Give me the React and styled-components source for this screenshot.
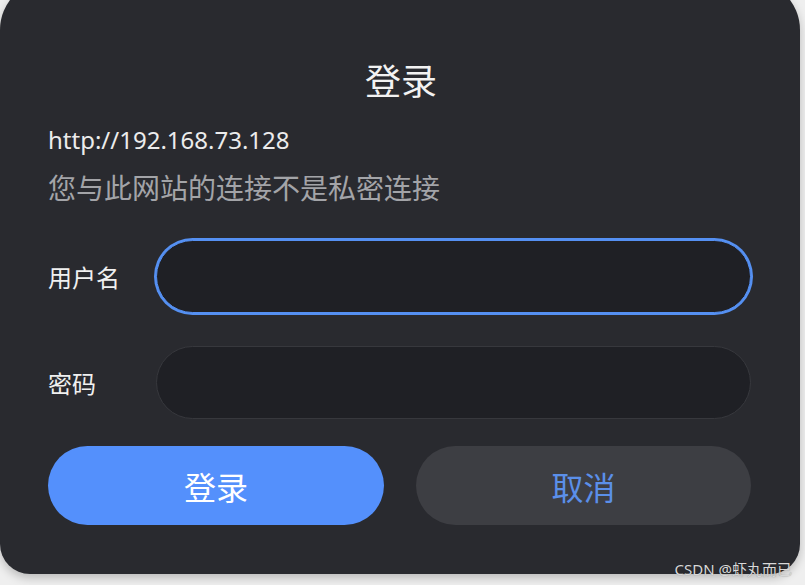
import React from "react";
import styled, { createGlobalStyle } from "styled-components";

const Global = createGlobalStyle`
  html, body { margin: 0; padding: 0; }
  body {
    background: #efefef;
    overflow: hidden;
    font-family: "Noto Sans", "Noto Sans CJK SC", sans-serif;
  }
`;

const Page = styled.div`
  position: relative;
  width: 805px;
  height: 585px;
  overflow: hidden;
`;

const Card = styled.div`
  box-sizing: border-box;
  width: 800px;
  height: 594px;
  margin-top: -20px;
  background: #292a2f;
  border-radius: 50px 50px 30px 30px;
  box-shadow: 0 4px 10px rgba(0, 0, 0, 0.22);
  padding: 82px 49px 0 48px;
  display: flex;
  flex-direction: column;
`;

const Title = styled.h1`
  margin: 0;
  font-size: 36px;
  line-height: 40px;
  font-weight: 400;
  color: #f2f2f2;
  text-align: center;
  padding-left: 3px;
`;

const Url = styled.div`
  margin-top: 23px;
  font-size: 24px;
  line-height: 30px;
  color: #ececec;
`;

const Notice = styled.div`
  margin-top: 15px;
  font-size: 28px;
  line-height: 36px;
  color: #a3a4a8;
`;

const Field = styled.div`
  display: flex;
  align-items: center;
  margin-top: ${(p) => p.$gap}px;
`;

const Label = styled.label`
  width: 108px;
  flex: none;
  font-size: 24px;
  color: #f0f0f0;
`;

const Input = styled.input`
  box-sizing: border-box;
  width: 595px;
  height: 73px;
  border-radius: 37px;
  background: #1f2025;
  border: 1px solid ${(p) => (p.$focused ? "#5590f2" : "#37383d")};
  box-shadow: ${(p) => (p.$focused ? "0 0 0 2px #5590f2" : "none")};
  outline: none;
  color: #fff;
  font-size: 22px;
  padding: 0 28px;
  font-family: inherit;
`;

const Buttons = styled.div`
  display: grid;
  grid-template-columns: 336px 335px;
  column-gap: 32px;
  margin-top: 27px;
`;

const Button = styled.button`
  height: 79px;
  border: none;
  border-radius: 40px;
  font-family: inherit;
  font-size: 32px;
  background: ${(p) => (p.$primary ? "#5490fc" : "#3d3e43")};
  color: ${(p) => (p.$primary ? "#ffffff" : "#5b8fe9")};
  cursor: pointer;
`;

const Watermark = styled.div`
  position: absolute;
  right: 13px;
  bottom: 7px;
  font-size: 15px;
  line-height: 18px;
  color: #d8d8d8;
  text-shadow: 0 0 1px rgba(0, 0, 0, 0.35);
`;

export default function App() {
  return (
    <Page>
      <Global />
      <Card>
        <Title>登录</Title>
        <Url>http://192.168.73.128</Url>
        <Notice>您与此网站的连接不是私密连接</Notice>
        <Field $gap={34}>
          <Label>用户名</Label>
          <Input $focused type="text" />
        </Field>
        <Field $gap={33}>
          <Label>密码</Label>
          <Input type="password" />
        </Field>
        <Buttons>
          <Button $primary>登录</Button>
          <Button>取消</Button>
        </Buttons>
      </Card>
      <Watermark>CSDN @虾丸而已</Watermark>
    </Page>
  );
}
